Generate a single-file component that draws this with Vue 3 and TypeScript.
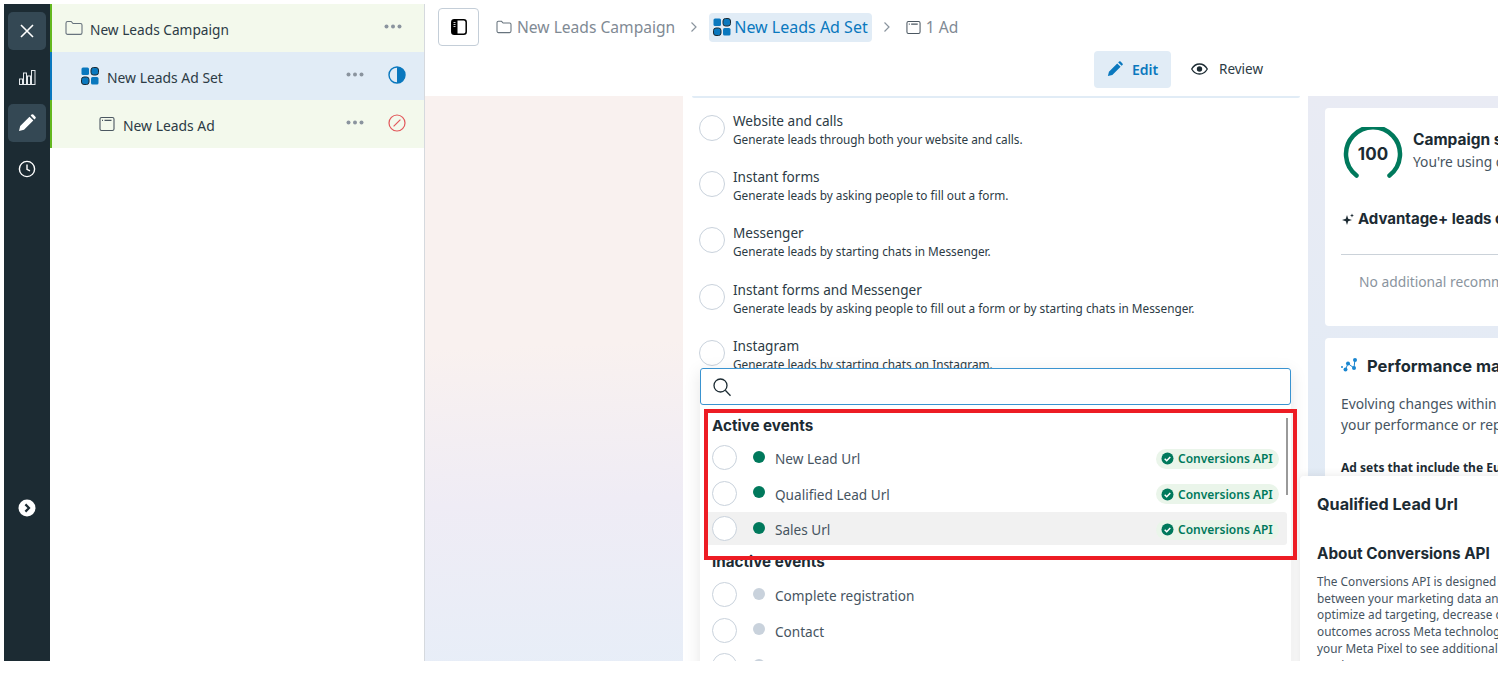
<script setup lang="ts">
const goals = [
  { title: 'Website and calls', sub: 'Generate leads through both your website and calls.' },
  { title: 'Instant forms', sub: 'Generate leads by asking people to fill out a form.' },
  { title: 'Messenger', sub: 'Generate leads by starting chats in Messenger.' },
  { title: 'Instant forms and Messenger', sub: 'Generate leads by asking people to fill out a form or by starting chats in Messenger.' },
  { title: 'Instagram', sub: 'Generate leads by starting chats on Instagram.' },
]
const active = ['New Lead Url', 'Qualified Lead Url', 'Sales Url']
const inactive = ['Complete registration', 'Contact', 'Donate']
const about = [
  'The Conversions API is designed to create a connection',
  'between your marketing data and Meta systems that',
  'optimize ad targeting, decrease cost per result and measure',
  'outcomes across Meta technologies. Connect it to',
  'your Meta Pixel to see additional',
  'results.',
]
</script>

<template>
  <div class="page">
    <nav class="rail">
      <button class="rail-btn on">
        <svg width="16" height="16" viewBox="0 0 16 16"><path d="M2 2l12 12M14 2L2 14" stroke="#fff" stroke-width="1.6" fill="none"/></svg>
      </button>
      <button class="rail-btn">
        <svg width="17" height="15" viewBox="0 0 17 15" fill="none" stroke="#e4e8eb" stroke-width="1"><rect x="0.5" y="9" width="3" height="5.5"/><rect x="4.5" y="3" width="3" height="11.5"/><rect x="8.5" y="6" width="3" height="8.5"/><rect x="12.500" y="0.5" width="3.500" height="14"/></svg>
      </button>
      <button class="rail-btn on">
        <svg width="18" height="18" viewBox="0 0 18 18"><path d="M1 17l1.200-5L11.500 2.700l3.800 3.800L6 15.800zM12.600 1.600l1-1a1.200 1.200 0 0 1 1.700 0l2.100 2.100a1.200 1.200 0 0 1 0 1.700l-1 1z" fill="#fff"/></svg>
      </button>
      <button class="rail-btn">
        <svg width="18" height="18" viewBox="0 0 18 18" fill="none" stroke="#fff" stroke-width="1.4"><circle cx="9" cy="9" r="7.6"/><path d="M9 4.600V9.400l3 1.400"/></svg>
      </button>
      <span class="rail-space"></span>
      <svg class="expand" width="18" height="18" viewBox="0 0 18 18"><circle cx="9" cy="9" r="8.500" fill="#fff"/><path d="M7.400 5.400L11 9l-3.600 3.600" stroke="#1c2b33" stroke-width="2.200" fill="none"/></svg>
    </nav>

    <aside class="tree">
      <div class="tree-row green">
        <svg class="ti" width="18" height="16" viewBox="0 0 18 16" fill="none" stroke="#67737d" stroke-width="1.100"><path d="M1 3.200c0-1 .7-1.700 1.600-1.700h3.600l1.800 2h7.400c1 0 1.600.7 1.600 1.600v7.600c0 1-.7 1.700-1.600 1.700H2.600c-.9 0-1.600-.7-1.600-1.700z"/></svg>
        <span class="tree-label">New Leads Campaign</span>
        <svg class="dots l1" width="18" height="5" viewBox="0 0 18 5" fill="#8a949e"><circle cx="2.500" cy="2.500" r="2"/><circle cx="9" cy="2.500" r="2"/><circle cx="15.500" cy="2.500" r="2"/></svg>
      </div>
      <div class="tree-row blue">
        <svg class="ti ind1" width="18" height="18" viewBox="0 0 18 18"><rect x="0.5" y="0.5" width="7.500" height="7.500" rx="1.500" fill="#0a78be"/><rect x="10" y="0.5" width="7.500" height="7.500" rx="2.500" fill="#0a78be" stroke="#1c2b33"/><rect x="0.5" y="10" width="7.500" height="7.500" rx="2.500" fill="#0a78be" stroke="#1c2b33"/><rect x="10" y="10" width="7.500" height="7.500" rx="1.500" fill="#0a78be"/></svg>
        <span class="tree-label wide">New Leads Ad Set</span>
        <svg class="dots" width="18" height="5" viewBox="0 0 18 5" fill="#8a949e"><circle cx="2.500" cy="2.500" r="2"/><circle cx="9" cy="2.500" r="2"/><circle cx="15.500" cy="2.500" r="2"/></svg>
        <svg class="status" width="18" height="18" viewBox="0 0 18 18"><circle cx="9" cy="9" r="8" fill="none" stroke="#0a78be" stroke-width="1.400"/><path d="M9 1a8 8 0 0 1 0 16z" fill="#0a78be"/></svg>
      </div>
      <div class="tree-row green">
        <svg class="ti ind2" width="16" height="16" viewBox="0 0 16 16" fill="none" stroke="#4b5761" stroke-width="1.100"><rect x="1" y="1.500" width="14" height="13" rx="1.600"/><path d="M3 4.400h1M5.500 4.400h7"/></svg>
        <span class="tree-label wide">New Leads Ad</span>
        <svg class="dots" width="18" height="5" viewBox="0 0 18 5" fill="#8a949e"><circle cx="2.500" cy="2.500" r="2"/><circle cx="9" cy="2.500" r="2"/><circle cx="15.500" cy="2.500" r="2"/></svg>
        <svg class="status" width="18" height="18" viewBox="0 0 18 18" fill="none" stroke="#e2575a" stroke-width="1.200"><circle cx="9" cy="9" r="8"/><path d="M5.600 12.400l6.800-6.800"/></svg>
      </div>
    </aside>

    <main class="main">
      <header class="top">
        <div class="crumbs">
          <button class="toggle">
            <svg width="16" height="16" viewBox="0 0 16 16"><rect x="0.8" y="0.8" width="14.400" height="14.400" rx="2.500" fill="#fff" stroke="#000" stroke-width="1.500"/><path d="M3 0.8h3.500v14.400H3a2.200 2.200 0 0 1-2.200-2.200V3A2.200 2.200 0 0 1 3 .8z" fill="#000"/><path d="M2.500 3.500h2M2.500 5.500h2M2.500 7.500h2" stroke="#fff" stroke-width="0.800"/></svg>
          </button>
          <span class="crumb grey">
            <svg width="16" height="14" viewBox="0 0 18 16" fill="none" stroke="#67737d" stroke-width="1.200"><path d="M1 3.200c0-1 .7-1.700 1.600-1.700h3.600l1.800 2h7.400c1 0 1.600.7 1.600 1.600v7.600c0 1-.7 1.700-1.600 1.700H2.600c-.9 0-1.600-.7-1.600-1.700z"/></svg>
            New Leads Campaign
          </span>
          <svg class="chev" width="8" height="12" viewBox="0 0 8 12" fill="none" stroke="#8a949e" stroke-width="1.200"><path d="M1.500 1.500L6 6l-4.500 4.500"/></svg>
          <span class="crumb cur">
            <svg width="18" height="18" viewBox="0 0 18 18"><rect x="0.5" y="0.5" width="7.500" height="7.500" rx="1.500" fill="#0a78be"/><rect x="10" y="0.5" width="7.500" height="7.500" rx="2.500" fill="#0a78be" stroke="#1c2b33"/><rect x="0.5" y="10" width="7.500" height="7.500" rx="2.500" fill="#0a78be" stroke="#1c2b33"/><rect x="10" y="10" width="7.500" height="7.500" rx="1.500" fill="#0a78be"/></svg>
            New Leads Ad Set
          </span>
          <svg class="chev after" width="8" height="12" viewBox="0 0 8 12" fill="none" stroke="#8a949e" stroke-width="1.200"><path d="M1.500 1.500L6 6l-4.500 4.500"/></svg>
          <span class="crumb grey">
            <svg width="15" height="15" viewBox="0 0 16 16" fill="none" stroke="#4b5761" stroke-width="1.100"><rect x="1" y="1.500" width="14" height="13" rx="1.600"/><path d="M3 4.400h1M5.500 4.400h7"/></svg>
            1 Ad
          </span>
        </div>
        <div class="modes">
          <span class="mode edit">
            <svg width="16" height="16" viewBox="0 0 18 18"><path d="M1 17l1.200-5L11.500 2.700l3.800 3.800L6 15.800zM12.600 1.600l1-1a1.200 1.200 0 0 1 1.700 0l2.100 2.100a1.200 1.200 0 0 1 0 1.700l-1 1z" fill="#0a78be"/></svg>
            Edit
          </span>
          <span class="mode review">
            <svg width="17" height="12" viewBox="0 0 17 12"><path d="M.7 6C2.500 2.800 5.200 1 8.500 1s6 1.800 7.800 5c-1.800 3.200-4.500 5-7.800 5S2.500 9.200.7 6z" fill="none" stroke="#1c2b33" stroke-width="1.300"/><circle cx="8.500" cy="6" r="2.700" fill="#1c2b33"/></svg>
            Review
          </span>
        </div>
      </header>

      <div class="body">
        <section class="center">
          <div class="goal" v-for="g in goals" :key="g.title">
            <span class="radio goal-radio"></span>
            <div>
              <div class="goal-title">{{ g.title }}</div>
              <div class="goal-sub">{{ g.sub }}</div>
            </div>
          </div>
        </section>

        <section class="right">
          <div class="card score">
            <div class="score-head">
              <svg class="gauge-svg" width="60" height="54" viewBox="0 0 60 54"><path d="M13.500 48.500A27 27 0 1 1 46.500 48.500" fill="none" stroke="#00795c" stroke-width="4.500" stroke-linecap="round"/><text x="30" y="33" text-anchor="middle" class="gauge">100</text></svg>
              <div class="score-copy">
                <div class="card-title">Campaign score</div>
                <div class="card-text">You're using our recommended setup</div>
              </div>
            </div>
            <div class="adv">
              <svg class="fix" width="12" height="12" viewBox="0 0 12 12"><path d="M5 2L6.200 5.800 10 7 6.200 8.200 5 12 3.800 8.200 0 7 3.800 5.800zM10 .5L10.600 2 12 2.500 10.600 3 10 4.500 9.400 3 8 2.500 9.400 2z" fill="#1c2b33"/></svg>
              <span>Advantage+ leads campaign</span>
            </div>
            <div class="rule"></div>
            <div class="none">No additional recommendations</div>
          </div>

          <div class="card perf">
            <div class="perf-head">
              <svg class="fix" width="17" height="16" viewBox="0 0 17 16"><path d="M4.500 11.500L7 5.500l6 4.500L14 1" fill="none" stroke="#1a86d0" stroke-width="1"/><circle cx="1" cy="9" r="1" fill="#1a86d0"/><circle cx="4.500" cy="11.500" r="2" fill="#1a86d0"/><circle cx="7" cy="5.500" r="2" fill="#1a86d0"/><circle cx="13" cy="10" r="2" fill="#1a86d0"/><circle cx="14" cy="2" r="2" fill="#1a86d0"/></svg>
              <span class="card-title perf-title">Performance may change</span>
            </div>
            <div class="card-text lines">Evolving changes within our systems may affect<br>your performance or reporting results.</div>
            <div class="perf-note">Ad sets that include the European Region</div>
          </div>
        </section>
      </div>

      <div class="dropdown">
        <div class="search">
          <svg width="20" height="20" viewBox="0 0 20 20" fill="none" stroke="#1c2b33" stroke-width="1.300"><circle cx="8.500" cy="8.500" r="6.500"/><path d="M13.300 13.300L18.500 18.800"/></svg>
        </div>
        <div class="list">
          <span class="thumb"></span>
          <div class="group">Active events</div>
          <div class="event" :class="{ hover: name === 'Sales Url' }" v-for="name in active" :key="name">
            <span class="radio"></span>
            <span class="dot live"></span>
            <span class="event-name">{{ name }}</span>
            <span class="badge">
              <svg class="fix" width="13" height="13" viewBox="0 0 13 13"><circle cx="6.500" cy="6.500" r="6" fill="#00795c"/><path d="M3.700 6.700l2 2 3.600-3.800" fill="none" stroke="#fff" stroke-width="1.500"/></svg>
              Conversions API
            </span>
          </div>
          <div class="group second">Inactive events</div>
          <div class="event" v-for="name in inactive" :key="name">
            <span class="radio"></span>
            <span class="dot"></span>
            <span class="event-name">{{ name }}</span>
          </div>
        </div>
      </div>

      <aside class="pop">
        <div class="pop-title first">Qualified Lead Url</div>
        <div class="pop-title second">About Conversions API</div>
        <div class="pop-text">
          <div v-for="l in about" :key="l">{{ l }}</div>
        </div>
      </aside>

      <div class="mark"></div>
    </main>
  </div>
</template>

<style>
html, body { margin: 0; background: #fff; overflow: hidden; }
</style>

<style scoped>
.page {
  width: 1498px; height: 682px; box-sizing: border-box;
  padding: 4px 0 21px 4px;
  display: flex; overflow: hidden; background: #fff;
  font-family: "Noto Sans", "Open Sans", sans-serif; color: #1c2b33;
}
button { border: 0; padding: 0; background: none; display: flex; align-items: center; justify-content: center; }
.fix { flex: none; }

.rail { width: 46px; flex: none; background: #1c2b33; display: flex; flex-direction: column; align-items: center; padding-top: 8px; box-sizing: border-box; gap: 8px; }
.rail-btn { width: 38px; height: 38px; border-radius: 5px; }
.rail-btn.on { background: #344854; }
.rail-space { flex: 1; }
.expand { margin-bottom: 144px; }

.tree { width: 374px; flex: none; border-right: 1px solid #d5d9de; }
.tree-row { height: 48px; display: flex; align-items: center; box-sizing: border-box; padding-left: 13px; font-size: 13.700px; color: #2c3b45; position: relative; }
.green { background: #f3f9ec; border-left: 2px solid #63b81f; }
.blue { background: #e1ecf6; border-left: 2px solid #0a78be; }
.ti { flex: none; margin-right: 7px; }
.ind1 { margin-left: 16px; margin-right: 8px; }
.ind2 { margin-left: 34px; margin-right: 8px; }
.tree-label { flex: 1; position: relative; top: 1px; }
.tree-label.wide { font-size: 13.900px; }
.dots { flex: none; margin-right: 24px; position: relative; top: -2px; }
.dots.l1 { margin-right: 22px; }
.status { flex: none; margin-right: 18px; position: relative; top: -1px; }

.main { flex: 1; min-width: 0; display: flex; flex-direction: column; position: relative; overflow: hidden; }
.top { height: 92px; flex: none; background: #fff; display: flex; flex-direction: column; padding: 4px 0 0 13px; box-sizing: border-box; }
.crumbs { display: flex; align-items: center; height: 38px; font-size: 15.600px; }
.toggle { width: 41px; height: 38px; box-sizing: border-box; border: 1px solid #c4ced8; border-radius: 4px; margin-right: 17px; }
.crumb { display: flex; align-items: center; gap: 5px; white-space: nowrap; }
.grey { color: #7f8a94; }
.cur { color: #0a78be; background: #e1ecf6; border-radius: 4px; height: 29px; padding: 0 4px; gap: 3px; font-size: 16px; margin-left: -4px; }
.chev { flex: none; margin: 0 15px; }
.chev.after { margin-left: 11px; }
.modes { display: flex; height: 38px; margin: 4px 0 0 656px; align-items: center; font-size: 14px; }
.mode { display: flex; align-items: center; gap: 9px; }
.edit { width: 77px; height: 37px; box-sizing: border-box; justify-content: center; background: #e1ecf6; color: #0a78be; border-radius: 4px; font-weight: 600; margin-right: 20px; }
.review { color: #2c3b45; gap: 11px; font-size: 13.500px; }

.body {
  flex: 1; min-height: 0; display: flex; padding-left: 258px;
  background: linear-gradient(178deg, #f9f1ef 0%, #f9f1ef 42%, #efecf5 68%, #e6eef8 100%);
}
.center { width: 625px; flex: none; background: #fff; box-sizing: border-box; padding: 15px 8px 0 16px; position: relative; display: flex; flex-direction: column; gap: 17.500px; }
.center::before { content: ""; position: absolute; left: 9px; right: 8px; top: 0; height: 2px; background: #e1ecf6; border-radius: 0 0 3px 3px; }
.goal { display: flex; gap: 8px; height: 38.700px; align-items: flex-start; }
.radio { width: 25px; height: 25px; flex: none; box-sizing: border-box; border: 1px solid #c9d2dc; border-radius: 50%; background: #fff; }
.goal-radio { width: 26px; height: 26px; margin-top: 4px; }
.goal-title { font-size: 13.600px; line-height: 20px; color: #2c3b45; }
.goal-sub { font-size: 11.800px; line-height: 17px; color: #2c3b45; }

.right { flex: 1; min-width: 0; padding: 12px 0 0 17px; display: flex; flex-direction: column; gap: 12px; background: linear-gradient(180deg, #e9ebf4, #dfebf6); }
.card { background: #fff; border-radius: 4px 0 0 4px; padding: 0 0 0 16px; overflow: hidden; white-space: nowrap; }
.score { height: 218px; flex: none; }
.score-head { display: flex; padding-top: 19px; gap: 10px; margin-left: 2px; align-items: flex-start; }
.gauge-svg { flex: none; }
.score-copy { margin-top: 2px; }
.gauge { font: 700 17px "Inter", sans-serif; fill: #1c2b33; }
.card-title { font: 700 15.500px/22px "Inter", sans-serif; color: #1c2b33; }
.perf-title { font-size: 16.500px; }
.card-text { font-size: 13.800px; line-height: 21px; color: #46545f; }
.adv { display: flex; align-items: center; gap: 4px; margin: 27px 0 0 1px; font: 700 15px/22px "Inter", sans-serif; }
.rule { height: 1px; background: #cbd2d9; margin-top: 24px; }
.none { font-size: 13.800px; line-height: 20px; color: #8a949e; margin: 17px 0 0 18px; }
.perf { flex: 1; }
.perf-head { display: flex; align-items: center; gap: 9px; padding-top: 17px; }
.lines { margin-top: 16px; }
.perf-note { margin-top: 24px; font-size: 12px; font-weight: 700; line-height: 18px; }

.dropdown { position: absolute; left: 275px; top: 364px; width: 591px; height: 320px; background: #fff; box-shadow: 0 4px 16px rgba(0,0,0,.1); }
.search { height: 37px; box-sizing: border-box; border: 1.500px solid #3a93d0; border-radius: 3px; display: flex; align-items: center; padding-left: 11px; background: #fff; }
.list { position: relative; padding: 6px 4px 0 5px; }
.thumb { position: absolute; right: 3px; top: 13px; width: 2px; height: 77px; background: #9a9a9a; }
.group { font: 700 15.200px/22px "Inter", sans-serif; padding-left: 7px; height: 27px; margin-top: 4px; color: #1c2b33; }
.group.second { margin-top: 5px; height: 28px; }
.event { height: 33px; margin-bottom: 2.500px; border-radius: 3px; display: flex; align-items: center; padding-left: 7px; box-sizing: border-box; position: relative; top: -1px; }
.hover { background: #f1f1f1; }
.dot { width: 12px; height: 12px; border-radius: 50%; background: #c9d2dc; margin-left: 16px; flex: none; position: relative; top: -1px; }
.live { background: #00795c; }
.event-name { font-size: 13.600px; color: #46545f; margin-left: 10px; flex: 1; position: relative; top: 1px; }
.badge { height: 20px; width: 123px; flex: none; margin-right: 8px; box-sizing: border-box; padding-left: 5px; background: #eaf5ea; border-radius: 10px; display: flex; align-items: center; gap: 4px; color: #00795c; font-size: 12px; font-weight: 600; white-space: nowrap; position: relative; top: 1px; }

.pop { position: absolute; left: 875px; top: 472px; width: 300px; height: 240px; background: #fff; border-radius: 4px 0 0 0; box-shadow: 0 0 10px rgba(0,0,0,.1); padding: 16px 0 0 17px; box-sizing: border-box; white-space: nowrap; overflow: hidden; }
.pop-title { font: 700 15.300px/24px "Inter", sans-serif; color: #1c2b33; }
.pop-title.first { font-size: 16.200px; }
.pop-title.second { margin-top: 26px; }
.pop-text { margin-top: 7px; font-size: 11.800px; line-height: 16.700px; color: #46545f; }

.mark { position: absolute; left: 279px; top: 405px; width: 593px; height: 151px; box-sizing: border-box; border: 4px solid #ed1c24; pointer-events: none; }
</style>
